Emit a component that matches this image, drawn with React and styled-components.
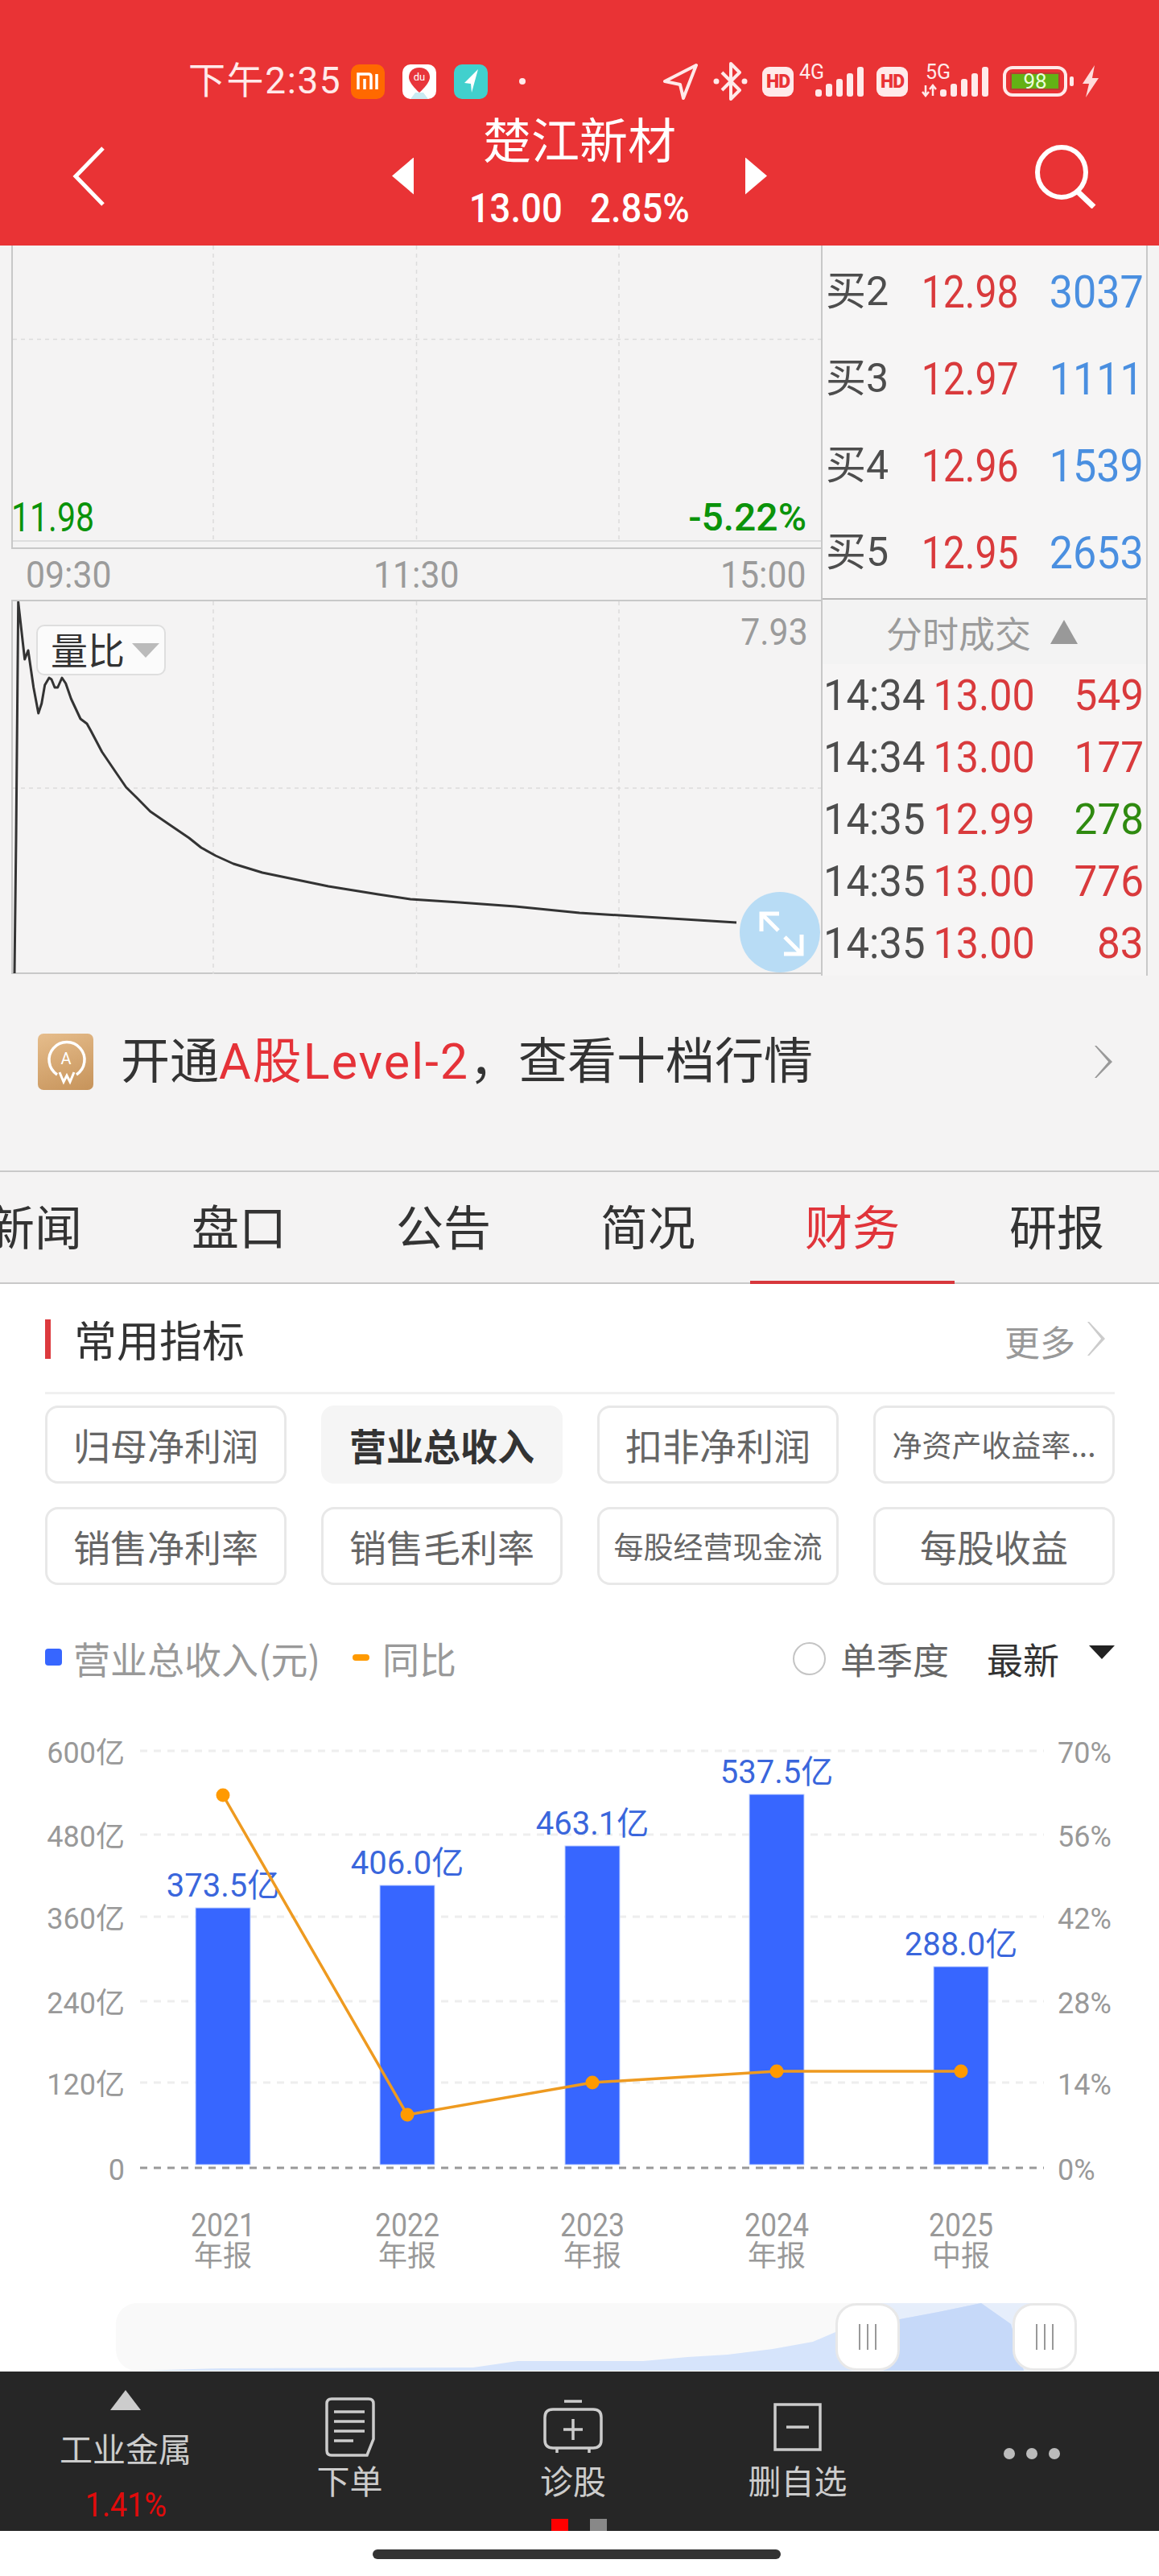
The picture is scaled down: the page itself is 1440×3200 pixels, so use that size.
import React from "react"
import styled, { createGlobalStyle } from "styled-components"

const CJK = `"Noto Sans CJK SC", "Noto Sans", sans-serif`
const NUM = `Roboto, "Noto Sans CJK SC", sans-serif`

const GlobalStyle = createGlobalStyle`
  html, body { margin: 0; padding: 0; background: #fff; }
  * { box-sizing: border-box; }
`

const book = [
  { label: "买2", price: "12.98", qty: "3037" },
  { label: "买3", price: "12.97", qty: "1111" },
  { label: "买4", price: "12.96", qty: "1539" },
  { label: "买5", price: "12.95", qty: "2653" },
]

const trades = [
  { time: "14:34", price: "13.00", qty: "549" },
  { time: "14:34", price: "13.00", qty: "177" },
  { time: "14:35", price: "12.99", qty: "278", down: true },
  { time: "14:35", price: "13.00", qty: "776" },
  { time: "14:35", price: "13.00", qty: "83" },
]

const tabs = ["新闻", "盘口", "公告", "简况", "财务", "研报"]

const pills = [
  { text: "归母净利润" },
  { text: "营业总收入", active: true },
  { text: "扣非净利润" },
  { text: "净资产收益率...", small: true },
  { text: "销售净利率" },
  { text: "销售毛利率" },
  { text: "每股经营现金流", small: true },
  { text: "每股收益" },
]

const bars = [
  { x: 243, top: 2371, value: "373.5亿", year: "2021", kind: "年报", cx: 277, dot: 2231 },
  { x: 472, top: 2343, value: "406.0亿", year: "2022", kind: "年报", cx: 506, dot: 2628 },
  { x: 702, top: 2294, value: "463.1亿", year: "2023", kind: "年报", cx: 736, dot: 2588 },
  { x: 931, top: 2230, value: "537.5亿", year: "2024", kind: "年报", cx: 965, dot: 2574 },
  { x: 1160, top: 2444, value: "288.0亿", year: "2025", kind: "中报", cx: 1194, dot: 2574 },
]

const yAxis = [
  { y: 2176, left: "600亿", right: "70%" },
  { y: 2280, left: "480亿", right: "56%" },
  { y: 2382, left: "360亿", right: "42%" },
  { y: 2487, left: "240亿", right: "28%" },
  { y: 2588, left: "120亿", right: "14%" },
  { y: 2694, left: "0", right: "0%", zero: true },
]

const curve =
  "18,1208 20,1040 22.7,747 30.7,818 35,807 41.7,853 47.7,885 51.7,873 55.7,850 61,841 64,843 68,853 71.7,853 77,841 81.7,848 88.3,867 100,892 108,898 113,907 126.7,933 143,957 156.7,977 170,990 186.7,1007 210,1023 235,1040 250,1052 268,1062 290,1072 326,1083 408,1100 470,1110 510,1116 571,1120 640,1125 720,1133 915,1145"

const sliderArea =
  "174,2946 275,2943 588,2942 643,2934 799,2934 854,2929 904,2926 960,2919 1010,2910 1038,2898 1118,2882 1166,2873 1219,2862 1256,2888 1272,2946"

function StatusIcons() {
  return (
    <StatusRight>
      <Glyph $w={44} $ml={0} viewBox="0 0 44 46">
        <path d="M42 3 3 23l19 4 4 17z" fill="none" stroke="#ffeaea" strokeWidth="4" strokeLinejoin="round" />
      </Glyph>
      <Glyph $w={45} $ml={18} viewBox="0 0 45 48">
        <path d="M12 13l22 22-11 11V2l11 11-22 22" fill="none" stroke="#ffeaea" strokeWidth="4" strokeLinejoin="round" />
        <circle cx="5" cy="24" r="3.5" fill="#ffeaea" />
        <circle cx="40" cy="24" r="3.5" fill="#ffeaea" />
      </Glyph>
      <HdBadge $ml={17}>HD</HdBadge>
      <Signal label="4G" ml={7} />
      <HdBadge $ml={16}>HD</HdBadge>
      <Signal label="5G" ml={17} arrows />
      <Battery>
        <BatteryFill>98</BatteryFill>
      </Battery>
      <BatteryNub />
      <Glyph $w={22} $ml={10} viewBox="0 0 22 40">
        <path d="M16 0 1 23h8L5 40l16-24h-8z" fill="#ffdcdc" />
      </Glyph>
    </StatusRight>
  )
}

function Signal({ label, ml, arrows }) {
  const width = arrows ? 83 : 80
  const start = arrows ? 23 : 20
  const heights = [9, 16, 22, 29, 37]
  return (
    <SignalBox $w={width} $ml={ml}>
      <SignalLabel $left={arrows ? 5 : 0}>{label}</SignalLabel>
      <svg width={width} height="42" viewBox={`0 0 ${width} 42`}>
        {heights.map((h, i) => (
          <rect key={i} x={start + i * 13} y={40 - h} width="8" height={h} rx="3" fill="#ffeaea" />
        ))}
        {arrows && (
          <path d="M5 26v13M1 34l4 5 4-5M14 39V26M10 31l4-5 4 5" fill="none" stroke="#ffeaea" strokeWidth="2.5" />
        )}
      </svg>
    </SignalBox>
  )
}

function PriceChart() {
  return (
    <PricePanel>
      <ChartSvg height="368" viewBox="16 305 1004 368">
        <GridDash x1="265" y1="305" x2="265" y2="673" />
        <GridDash x1="517.5" y1="305" x2="517.5" y2="673" />
        <GridDash x1="769" y1="305" x2="769" y2="673" />
        <GridDash x1="16" y1="421.5" x2="1020" y2="421.5" />
        <line x1="16" y1="672" x2="1020" y2="672" stroke="#dedede" strokeWidth="2" />
      </ChartSvg>
      <LowPrice>11.98</LowPrice>
      <LowPct>-5.22%</LowPct>
    </PricePanel>
  )
}

function VolumeChart() {
  return (
    <VolumePanel>
      <ChartSvg height="463" viewBox="16 746 1004 463">
        <GridDash x1="265" y1="746" x2="265" y2="1209" />
        <GridDash x1="517.5" y1="746" x2="517.5" y2="1209" />
        <GridDash x1="769" y1="746" x2="769" y2="1209" />
        <GridDash x1="16" y1="978" x2="1020" y2="978" />
        <polyline points={curve} fill="none" stroke="#333" strokeWidth="3" strokeLinejoin="round" />
      </ChartSvg>
      <RatioTag>
        量比
        <RatioCaret />
      </RatioTag>
      <RatioValue>7.93</RatioValue>
      <ExpandButton>
        <svg width="100" height="100" viewBox="0 0 100 100">
          <path d="M27 49V27h22M27 27l21 21M77 53v24H55M77 77 56 56" fill="none" stroke="#fff" strokeWidth="5" />
        </svg>
      </ExpandButton>
    </VolumePanel>
  )
}

function RevenueChart() {
  const line = bars.map((b) => `${b.cx},${b.dot}`).join(" ")
  return (
    <ChartSvg height="762" viewBox="0 2100 1440 762">
      {yAxis.map((row) => (
        <g key={row.y}>
          <line
            x1="174"
            y1={row.y}
            x2="1297"
            y2={row.y}
            stroke={row.zero ? "#999" : "#eee"}
            strokeWidth="3"
            strokeDasharray="9 8"
          />
          <AxisText x="155" y={row.y + 15} textAnchor="end">
            {row.left}
          </AxisText>
          <AxisText x="1314" y={row.y + 15}>
            {row.right}
          </AxisText>
        </g>
      ))}
      {bars.map((b) => (
        <g key={b.year}>
          <rect x={b.x} y={b.top} width="68" height={2690 - b.top} fill="#3766ff" stroke="#c4d4ff" strokeWidth="1" />
          <ValueText x={b.cx} y={b.top - 14} textAnchor="middle">
            {b.value}
          </ValueText>
          <YearText x={b.cx} y="2779" textAnchor="middle" textLength="80" lengthAdjust="spacingAndGlyphs">
            {b.year}
          </YearText>
          <AxisText x={b.cx} y="2816" textAnchor="middle">
            {b.kind}
          </AxisText>
        </g>
      ))}
      <polyline points={line} fill="none" stroke="#ee9a20" strokeWidth="3.5" />
      {bars.map((b) => (
        <circle key={b.year} cx={b.cx} cy={b.dot} r="8.5" fill="#ff9a00" />
      ))}
    </ChartSvg>
  )
}

function RangeSlider() {
  return (
    <Slider>
      <ChartSvg height="84" viewBox="144 2862 1194 84">
        <defs>
          <clipPath id="selection">
            <rect x="1078" y="2862" width="220" height="84" />
          </clipPath>
        </defs>
        <rect x="144" y="2862" width="1194" height="84" rx="26" fill="#f9f9f9" />
        <rect x="1078" y="2862" width="220" height="84" fill="#e6eefb" />
        <polygon points={sliderArea} fill="#d6e4fb" />
        <polygon points={sliderArea} fill="#c6d9f9" clipPath="url(#selection)" />
      </ChartSvg>
      <SliderHandle $left={894}>
        <HandleLine />
        <HandleLine />
        <HandleLine />
      </SliderHandle>
      <SliderHandle $left={1114}>
        <HandleLine />
        <HandleLine />
        <HandleLine />
      </SliderHandle>
    </Slider>
  )
}

export default function App() {
  return (
    <Page>
      <GlobalStyle />
      <Header>
        <StatusBar>
          <StatusLeft>
            <Clock>下午2:35</Clock>
            <AppIcon $bg="#ff6900" $ml={14}>
              <svg width="30" height="24" viewBox="0 0 30 24">
                <path d="M3 22V3h13q3 0 3 3v16M11 9v13M26 3v19" fill="none" stroke="#fff" strokeWidth="3.5" />
              </svg>
            </AppIcon>
            <AppIcon $bg="#fff" $ml={22}>
              <svg width="42" height="43" viewBox="0 0 42 43">
                <path d="M21 4c-9 0-13 6-13 12 0 8 13 19 13 19s13-11 13-19c0-6-4-12-13-12z" fill="#e8353b" />
                <text x="21" y="20" fontSize="13" fill="#fff" textAnchor="middle" fontFamily="Roboto, sans-serif">
                  du
                </text>
                <path d="M10 43l6-8h10l6 8z" fill="#c8eaf2" />
              </svg>
            </AppIcon>
            <AppIcon $bg="#41d0cd" $ml={22}>
              <svg width="24" height="34" viewBox="0 0 24 34">
                <path d="M21 2 4 19l8 1 1 11z" fill="#fff" />
              </svg>
            </AppIcon>
            <StatusDot />
          </StatusLeft>
          <StatusIcons />
        </StatusBar>
        <NavRow>
          <BackIcon width="41" height="74" viewBox="0 0 41 74">
            <path d="M38 2 4 37l34 35" fill="none" stroke="#fff" strokeWidth="5" />
          </BackIcon>
          <StockSwitch>
            <Pointer $dir="left" />
            <StockTitle>
              <StockName>楚江新材</StockName>
              <StockQuote>
                <span>13.00</span>
                <span>2.85%</span>
              </StockQuote>
            </StockTitle>
            <Pointer $dir="right" />
          </StockSwitch>
          <SearchIcon width="76" height="80" viewBox="0 0 76 80">
            <ellipse cx="33" cy="35" rx="30" ry="31" fill="none" stroke="#fff" strokeWidth="6" />
            <path d="M54 60 73 78" fill="none" stroke="#fff" strokeWidth="7" />
          </SearchIcon>
        </NavRow>
      </Header>

      <Quote>
        <ChartColumn>
          <PriceChart />
          <TimeAxis>
            <span>09:30</span>
            <span>11:30</span>
            <span>15:00</span>
          </TimeAxis>
          <VolumeChart />
        </ChartColumn>
        <BookPanel>
          <BookRows>
            {book.map((row) => (
              <BookRow key={row.label}>
                <BookLabel>{row.label}</BookLabel>
                <Cell $color="#d93a3c" $size={56} $sx={0.86}>
                  {row.price}
                </Cell>
                <Cell $color="#4a8fe0" $size={56} $sx={0.93}>
                  {row.qty}
                </Cell>
              </BookRow>
            ))}
          </BookRows>
          <TradesHead>
            分时成交
            <TradesCaret />
          </TradesHead>
          <TradesList>
            {trades.map((row, i) => (
              <TradeRow key={i}>
                <Cell $color="#4d4d4d" $size={54} $sx={0.94} $left>
                  {row.time}
                </Cell>
                <Cell $color="#d93a3c" $size={54} $sx={0.93}>
                  {row.price}
                </Cell>
                <Cell $color={row.down ? "#2f8a10" : "#d93a3c"} $size={54} $sx={0.95}>
                  {row.qty}
                </Cell>
              </TradeRow>
            ))}
          </TradesList>
        </BookPanel>
      </Quote>

      <Banner>
        <BannerBadge>
          <svg width="56" height="62" viewBox="0 0 56 62">
            <path d="M17 47a22 22 0 1 1 24 0" fill="none" stroke="#fff" strokeWidth="3.5" />
            <path d="M20 44l5 12 4-8 4 8 5-12" fill="none" stroke="#fff" strokeWidth="3" />
            <text x="28" y="34" fontSize="20" fill="#fff" textAnchor="middle" fontFamily="Roboto, sans-serif">
              A
            </text>
          </svg>
        </BannerBadge>
        <BannerText>
          开通<em>A股Level-2</em>，查看十档行情
        </BannerText>
        <Chevron $h={40} $color="#999" />
      </Banner>

      <Tabs>
        {tabs.map((tab) => (
          <Tab key={tab} $active={tab === "财务"}>
            {tab}
          </Tab>
        ))}
      </Tabs>

      <Finance>
        <SectionHead>
          <SectionTitle>常用指标</SectionTitle>
          <MoreLink>
            <MoreText>更多</MoreText>
            <Chevron $h={42} $color="#ccc" />
          </MoreLink>
        </SectionHead>
        <PillGrid>
          {pills.map((pill) => (
            <Pill key={pill.text} $active={pill.active} $small={pill.small}>
              {pill.text}
            </Pill>
          ))}
        </PillGrid>
        <Legend>
          <LegendItem>
            <LegendBar />
            营业总收入(元)
          </LegendItem>
          <LegendItem>
            <LegendDash />
            同比
          </LegendItem>
          <QuarterToggle>
            <Radio />
            单季度
          </QuarterToggle>
          <Latest>最新</Latest>
          <LatestCaret />
        </Legend>
        <RevenueChart />
        <RangeSlider />
      </Finance>

      <BottomNav>
        <NavGrid>
          <SectorItem>
            <SectorCaret />
            <SectorName>工业金属</SectorName>
            <SectorPct>1.41%</SectorPct>
          </SectorItem>
          <NavItem>
            <NavIconSlot>
              <svg width="62" height="74" viewBox="0 0 62 74">
                <path
                  d="M8 2h46q6 0 6 6v44l-8 20H8q-6 0-6-6V8q0-6 6-6zM11 18h38M11 30h38M11 42h38M11 54h24"
                  fill="none"
                  stroke="#ccc"
                  strokeWidth="3.5"
                />
              </svg>
            </NavIconSlot>
            下单
          </NavItem>
          <NavItem>
            <NavIconSlot>
              <svg width="74" height="68" viewBox="0 0 74 68">
                <path
                  d="M26 2h22M12 12h50q10 0 10 10v28q0 10-10 10H12q-10 0-10-10V22q0-10 10-10zM17 60v6M57 60v6M37 24v26M25 37h24"
                  fill="none"
                  stroke="#ccc"
                  strokeWidth="3.5"
                />
              </svg>
            </NavIconSlot>
            诊股
          </NavItem>
          <NavItem>
            <NavIconSlot>
              <svg width="60" height="60" viewBox="0 0 60 60">
                <path d="M2 2h56v56H2zM16 30h28" fill="none" stroke="#ccc" strokeWidth="3.5" />
              </svg>
            </NavIconSlot>
            删自选
          </NavItem>
          <MoreDots>
            <Dot />
            <Dot />
            <Dot />
          </MoreDots>
        </NavGrid>
        <PageDots>
          <PageDot $on />
          <PageDot />
        </PageDots>
      </BottomNav>

      <HomeArea>
        <HomeBar />
      </HomeArea>
    </Page>
  )
}

const Page = styled.div`
  width: 1440px;
  height: 3200px;
  overflow: hidden;
  background: #f4f3f3;
  font-family: ${CJK};
`

const Header = styled.header`
  height: 305px;
  padding-top: 78px;
  background: #e93335;
`

const StatusBar = styled.div`
  display: flex;
  justify-content: space-between;
  height: 46px;
  padding: 0 74px 0 234px;
  color: #ffeaea;
`

const StatusLeft = styled.div`
  display: flex;
  align-items: center;
`

const StatusRight = styled.div`
  display: flex;
  align-items: center;
`

const Clock = styled.span`
  width: 188px;
  margin-top: -3px;
  font-family: ${NUM};
  font-size: 46px;
  letter-spacing: 1.6px;
  line-height: 46px;
  white-space: nowrap;
`

const AppIcon = styled.span`
  display: flex;
  align-items: center;
  justify-content: center;
  overflow: hidden;
  width: 42px;
  height: 43px;
  margin-left: ${(p) => p.$ml}px;
  border-radius: 10px;
  background: ${(p) => p.$bg};
`

const StatusDot = styled.span`
  width: 8px;
  height: 8px;
  margin-left: 39px;
  border-radius: 50%;
  background: #ffeaea;
`

const Glyph = styled.svg`
  display: block;
  flex: none;
  width: ${(p) => p.$w}px;
  margin-left: ${(p) => p.$ml}px;
`

const HdBadge = styled.span`
  display: flex;
  align-items: center;
  justify-content: center;
  flex: none;
  width: 39px;
  height: 37px;
  margin-left: ${(p) => p.$ml}px;
  border-radius: 9px;
  background: #ffeaea;
  color: #e93335;
  font-family: Roboto, sans-serif;
  font-size: 23px;
  font-weight: 900;
  letter-spacing: -1px;
`

const SignalBox = styled.span`
  position: relative;
  display: block;
  flex: none;
  width: ${(p) => p.$w}px;
  height: 42px;
  margin-left: ${(p) => p.$ml}px;

  svg {
    display: block;
  }
`

const SignalLabel = styled.span`
  position: absolute;
  top: -3px;
  left: ${(p) => p.$left}px;
  font-family: Roboto, sans-serif;
  font-size: 25px;
  line-height: 25px;
`

const Battery = styled.span`
  display: flex;
  align-items: center;
  justify-content: center;
  flex: none;
  width: 80px;
  height: 38px;
  margin-left: 18px;
  border: 4px solid #ffeaea;
  border-radius: 12px;
`

const BatteryFill = styled.span`
  width: 62px;
  height: 22px;
  border: 2px solid #b93c33;
  background: #63b115;
  color: #ecffdc;
  font-family: Roboto, sans-serif;
  font-size: 26px;
  line-height: 18px;
  text-align: center;
`

const BatteryNub = styled.span`
  flex: none;
  width: 5px;
  height: 12px;
  margin-left: 3px;
  border-radius: 2px;
  background: #ffeaea;
`

const NavRow = styled.div`
  display: grid;
  grid-template-columns: 1fr 466px 1fr;
  align-items: center;
  height: 181px;
  padding: 8px 78px 0;
`

const BackIcon = styled.svg`
  margin-left: 12px;
`

const SearchIcon = styled.svg`
  justify-self: end;
`

const StockSwitch = styled.div`
  display: flex;
  align-items: center;
  justify-content: space-between;
  width: 466px;
`

const Pointer = styled.span`
  width: 27px;
  height: 46px;
  background: #fff;
  clip-path: ${(p) =>
    p.$dir === "left" ? "polygon(100% 0, 100% 100%, 0 50%)" : "polygon(0 0, 100% 50%, 0 100%)"};
`

const StockTitle = styled.div`
  display: flex;
  flex-direction: column;
  align-items: center;
  margin-top: -18px;
  color: #fff;
`

const StockName = styled.div`
  font-size: 60px;
  line-height: 72px;
`

const StockQuote = styled.div`
  display: flex;
  gap: 22px;
  margin-top: 26px;
  font-family: ${NUM};
  font-size: 50px;
  font-weight: 500;
  line-height: 52px;

  span {
    transform: scaleX(0.91);
  }
`

const Quote = styled.section`
  display: grid;
  grid-template-columns: 1020px 406px;
  height: 907px;
`

const ChartColumn = styled.div`
  display: flex;
  flex-direction: column;
`

const ChartSvg = styled.svg`
  display: block;
  width: 100%;
`

const GridDash = styled.line`
  stroke: #dcdcdc;
  stroke-width: 1.5;
  stroke-dasharray: 5 5;
`

const PricePanel = styled.div`
  position: relative;
  height: 377px;
  margin-left: 14px;
  border-left: 2px solid #c8c8c8;
  border-bottom: 2px solid #c8c8c8;
`

const LowPrice = styled.span`
  position: absolute;
  left: -2px;
  bottom: 12px;
  color: #0a930a;
  font-family: ${NUM};
  font-size: 50px;
  line-height: 50px;
  transform: scaleX(0.82);
  transform-origin: left center;
`

const LowPct = styled.span`
  position: absolute;
  right: 18px;
  bottom: 12px;
  color: #0a930a;
  font-family: ${NUM};
  font-size: 48px;
  font-weight: 500;
  line-height: 50px;
`

const TimeAxis = styled.div`
  display: flex;
  align-items: center;
  justify-content: space-between;
  height: 63px;
  padding: 0 18px 0 32px;
  color: #9b9b9b;
  font-family: ${NUM};
  font-size: 46px;

  span:first-child {
    transform: scaleX(0.93);
    transform-origin: left center;
  }

  span:nth-child(2) {
    transform: scaleX(0.93);
  }

  span:last-child {
    transform: scaleX(0.93);
    transform-origin: right center;
  }
`

const VolumePanel = styled.div`
  position: relative;
  height: 465px;
  margin-left: 14px;
  border-top: 2px solid #c8c8c8;
  border-left: 2px solid #c8c8c8;
  border-bottom: 2px solid #c8c8c8;
`

const RatioTag = styled.div`
  position: absolute;
  top: 29px;
  left: 29px;
  display: flex;
  align-items: center;
  width: 161px;
  height: 63px;
  padding: 0 0 5px 16px;
  border: 2px solid #dedede;
  border-radius: 10px;
  background: #fbfbfb;
  color: #333;
  font-size: 46px;
`

const RatioCaret = styled.span`
  width: 0;
  height: 0;
  margin: 5px 0 0 9px;
  border-top: 18px solid #bbb;
  border-left: 17px solid transparent;
  border-right: 17px solid transparent;
`

const RatioValue = styled.span`
  position: absolute;
  top: 12px;
  right: 16px;
  color: #9b9b9b;
  font-family: ${NUM};
  font-size: 46px;
  line-height: 52px;
  transform: scaleX(0.93);
  transform-origin: right center;
`

const ExpandButton = styled.div`
  position: absolute;
  right: 1px;
  bottom: 0;
  width: 100px;
  height: 100px;
  border-radius: 50%;
  background: #b8dcf5;
`

const BookPanel = styled.aside`
  display: flex;
  flex-direction: column;
  border-left: 2px solid #c8c8c8;
  border-right: 2px solid #c8c8c8;
  background: #f6f5f5;
`

const BookRows = styled.div`
  display: flex;
  flex-direction: column;
  height: 440px;
  padding-top: 4px;
  border-bottom: 2px solid #b9b9b9;
`

const BookRow = styled.div`
  display: grid;
  grid-template-columns: 80px 160px 155px;
  align-items: center;
  height: 108px;
  padding-left: 4px;
`

const BookLabel = styled.span`
  margin-top: -12px;
  color: #4d4d4d;
  font-family: ${NUM};
  font-size: 50px;
  white-space: nowrap;
`

const Cell = styled.span`
  justify-self: ${(p) => (p.$left ? "start" : "end")};
  width: max-content;
  color: ${(p) => p.$color};
  font-family: ${NUM};
  font-size: ${(p) => p.$size}px;
  line-height: 60px;
  transform: scaleX(${(p) => p.$sx});
  transform-origin: ${(p) => (p.$left ? "left" : "right")} center;
`

const TradesHead = styled.div`
  display: flex;
  align-items: center;
  height: 80px;
  padding-left: 79px;
  background: #f3f3f3;
  color: #9b9b9b;
  font-size: 45px;
`

const TradesCaret = styled.span`
  width: 0;
  height: 0;
  margin-left: 24px;
  border-bottom: 30px solid #999;
  border-left: 17px solid transparent;
  border-right: 17px solid transparent;
`

const TradesList = styled.div`
  display: flex;
  flex-direction: column;
`

const TradeRow = styled.div`
  display: grid;
  grid-template-columns: 126px 137px 135px;
  align-items: center;
  height: 77px;
  padding-left: 1px;
`

const Banner = styled.section`
  display: flex;
  align-items: center;
  height: 242px;
  padding: 0 58px 28px 47px;
`

const BannerBadge = styled.span`
  display: flex;
  align-items: center;
  justify-content: center;
  width: 69px;
  height: 70px;
  border-radius: 7px;
  background: linear-gradient(160deg, #e6bd8c, #c6935a);
`

const BannerText = styled.div`
  flex: 1;
  margin-left: 34px;
  color: #333;
  font-family: ${NUM};
  font-size: 61px;
  font-weight: 400;
  line-height: 70px;

  em {
    color: #e53238;
    font-style: normal;
    letter-spacing: 2px;
  }
`

const Chevron = styled.span`
  display: block;
  width: 22px;
  height: ${(p) => p.$h}px;
  background: ${(p) => p.$color};
  clip-path: polygon(0 0, 10% 0, 100% 50%, 10% 100%, 0 100%, 78% 50%);
`

const Tabs = styled.nav`
  display: flex;
  height: 141px;
  margin-left: -84px;
  width: 1524px;
  border-top: 2px solid #c9c9c9;
  border-bottom: 2px solid #c9c9c9;
`

const Tab = styled.div`
  display: flex;
  align-items: center;
  justify-content: center;
  width: 254px;
  margin-bottom: -2px;
  padding-bottom: 4px;
  border-bottom: 4px solid ${(p) => (p.$active ? "#d7373c" : "transparent")};
  color: ${(p) => (p.$active ? "#e0343a" : "#333")};
  font-size: 59px;
`

const Finance = styled.section`
  height: 1351px;
  background: #fff;
`

const SectionHead = styled.div`
  display: flex;
  align-items: center;
  justify-content: space-between;
  height: 137px;
  margin: 0 55px 0 56px;
  padding: 2px 12px 0 0;
  border-bottom: 3px solid #f0f0f0;
`

const SectionTitle = styled.h2`
  margin: 0;
  padding-left: 29px;
  border-left: 7px solid #dc3a3e;
  color: #333;
  font-size: 53px;
  font-weight: 400;
  line-height: 49px;
`

const MoreLink = styled.div`
  display: flex;
  align-items: center;
  gap: 15px;
  color: #999;
  font-size: 44px;
`

const MoreText = styled.span`
  margin-top: 5px;
`

const PillGrid = styled.div`
  display: grid;
  grid-template-columns: repeat(4, 300px);
  grid-auto-rows: 97px;
  gap: 29px 43px;
  margin: 14px 55px 0 56px;
`

const Pill = styled.div`
  display: flex;
  align-items: center;
  justify-content: center;
  padding-bottom: 2px;
  border: 3px solid ${(p) => (p.$active ? "#f5f5f5" : "#e8e8e8")};
  border-radius: 16px;
  background: ${(p) => (p.$active ? "#f5f5f5" : "#fff")};
  color: ${(p) => (p.$active ? "#333" : "#666")};
  font-size: ${(p) => (p.$small ? 37 : 46)}px;
  font-weight: ${(p) => (p.$active ? 700 : 400)};
  white-space: nowrap;
`

const Legend = styled.div`
  display: flex;
  align-items: center;
  height: 42px;
  margin: 70px 55px 18px 56px;
  color: #999;
  font-size: 46px;
`

const LegendItem = styled.span`
  display: flex;
  align-items: center;
  margin: -3px 40px 0 0;
  white-space: nowrap;
`

const LegendBar = styled.i`
  width: 21px;
  height: 21px;
  margin-right: 14px;
  border-radius: 4px;
  background: #3766ff;
`

const LegendDash = styled.i`
  width: 21px;
  height: 8px;
  margin-right: 16px;
  border-radius: 4px;
  background: #ff9a00;
`

const QuarterToggle = styled.span`
  display: flex;
  align-items: center;
  gap: 18px;
  margin-left: auto;
  color: #666;
  font-size: 45px;
`

const Radio = styled.i`
  width: 41px;
  height: 41px;
  border: 2px solid #c4c4c4;
  border-radius: 50%;
`

const Latest = styled.span`
  margin-left: 47px;
  color: #333;
  font-size: 45px;
`

const LatestCaret = styled.i`
  align-self: flex-start;
  width: 0;
  height: 0;
  margin: 5px 0 0 37px;
  border-top: 17px solid #222;
  border-left: 16px solid transparent;
  border-right: 16px solid transparent;
`

const AxisText = styled.text`
  fill: #999;
  font-family: ${NUM};
  font-size: 36px;
`

const YearText = styled.text`
  fill: #999;
  font-family: ${NUM};
  font-size: 40px;
`

const ValueText = styled.text`
  fill: #3a66dc;
  font-family: ${NUM};
  font-size: 40px;
`

const Slider = styled.div`
  position: relative;
  height: 84px;
  margin: 0 102px 0 144px;
`

const SliderHandle = styled.div`
  position: absolute;
  top: 0;
  left: ${(p) => p.$left}px;
  display: flex;
  align-items: center;
  justify-content: center;
  gap: 8px;
  width: 80px;
  height: 84px;
  border: 3px solid #e8e8e8;
  border-radius: 26px;
  background: #fff;
`

const HandleLine = styled.i`
  width: 2px;
  height: 32px;
  background: #999;
`

const BottomNav = styled.footer`
  height: 198px;
  background: #262626;
`

const NavGrid = styled.div`
  display: grid;
  grid-template-columns: 312px 245px 310px 248px 1fr;
  height: 183px;
`

const NavItem = styled.div`
  display: flex;
  flex-direction: column;
  align-items: center;
  color: #ccc;
  font-size: 41px;
  line-height: 48px;
`

const NavIconSlot = styled.div`
  display: flex;
  align-items: center;
  justify-content: center;
  height: 82px;
  margin-top: 28px;
`

const SectorItem = styled.div`
  display: flex;
  flex-direction: column;
  align-items: center;
  padding-top: 23px;
`

const SectorCaret = styled.i`
  width: 38px;
  height: 25px;
  background: #ccc;
  clip-path: polygon(50% 0, 100% 100%, 0 100%);
`

const SectorName = styled.div`
  margin-top: 18px;
  color: #ccc;
  font-size: 41px;
  line-height: 56px;
`

const SectorPct = styled.div`
  margin-top: 20px;
  color: #e10b0b;
  font-family: ${NUM};
  font-size: 42px;
  line-height: 48px;
  transform: scaleX(0.9);
`

const MoreDots = styled.div`
  display: flex;
  align-items: center;
  justify-content: center;
  gap: 14px;
  padding: 14px 0 0 8px;
`

const Dot = styled.i`
  width: 14px;
  height: 14px;
  border-radius: 50%;
  background: #bbb;
`

const PageDots = styled.div`
  display: flex;
  gap: 27px;
  padding-left: 685px;
`

const PageDot = styled.i`
  width: 21px;
  height: 15px;
  background: ${(p) => (p.$on ? "#f00" : "#888")};
`

const HomeArea = styled.div`
  height: 56px;
  padding: 23px 470px 0 463px;
  background: #fff;
`

const HomeBar = styled.div`
  height: 12px;
  border-radius: 6px;
  background: #333;
`
